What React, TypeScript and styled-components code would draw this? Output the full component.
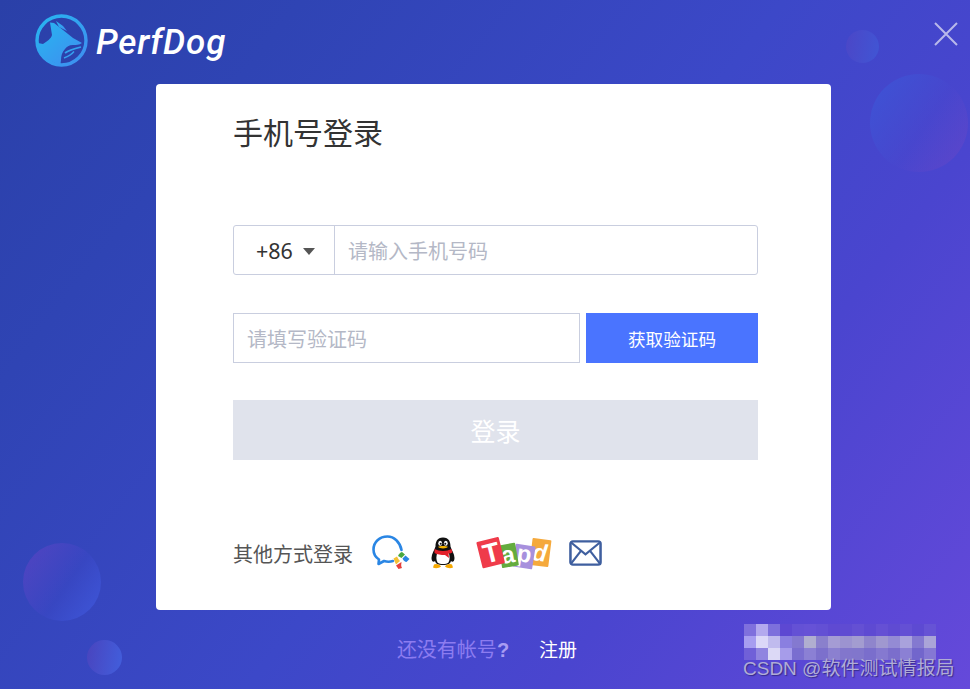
import React from "react";
import styled, { createGlobalStyle } from "styled-components";

const CJK = `"Noto Sans CJK SC", "Liberation Sans", sans-serif`;

const Global = createGlobalStyle`
  html, body { margin: 0; padding: 0; width: 970px; height: 689px; overflow: hidden; }
  * { box-sizing: border-box; }
`;

const Page = styled.div`
  position: relative;
  width: 970px;
  height: 689px;
  overflow: hidden;
  display: flex;
  flex-direction: column;
  align-items: center;
  font-family: ${CJK};
  background: linear-gradient(128deg, #2a40a8 0%, #2f44b4 20%, #3c48c8 52%, #4a45cf 72%, #6549da 100%);
`;

const Header = styled.header`
  position: relative;
  z-index: 1;
  width: 100%;
  height: 84px;
  flex: none;
  display: flex;
  align-items: flex-start;
  justify-content: space-between;
  padding: 14px 11px 0 35px;
`;

const Brand = styled.div`
  display: flex;
  align-items: center;
  gap: 8px;
  height: 53px;
`;

const BrandName = styled.span`
  font-family: Roboto, sans-serif;
  font-style: italic;
  font-weight: 500;
  font-size: 35px;
  letter-spacing: 0.8px;
  line-height: 53px;
  padding-top: 4px;
  color: #fff;
`;

const Close = styled.button`
  width: 26px;
  height: 26px;
  margin-top: 7px;
  padding: 0;
  border: 0;
  background: none;
  display: block;
`;

const Bubble = styled.div<{ $x: number; $y: number; $d: number; $bg: string }>`
  position: absolute;
  left: ${(p) => p.$x}px;
  top: ${(p) => p.$y}px;
  width: ${(p) => p.$d}px;
  height: ${(p) => p.$d}px;
  border-radius: 50%;
  background: ${(p) => p.$bg};
`;

const Card = styled.main`
  position: relative;
  z-index: 1;
  width: 675px;
  height: 526px;
  flex: none;
  margin-left: 17px;
  background: #fff;
  border-radius: 4px;
  padding: 26px 73px 0 77px;
  display: flex;
  flex-direction: column;
`;

const Title = styled.h1`
  margin: 0 0 73px;
  height: 42px;
  font-size: 30px;
  line-height: 42px;
  font-weight: 400;
  color: #333;
`;

const PhoneRow = styled.div`
  display: flex;
  height: 50px;
  margin-bottom: 38px;
  border: 1px solid #c9cedf;
  border-radius: 3px;
`;

const Country = styled.div`
  width: 101px;
  flex: none;
  display: flex;
  align-items: center;
  padding-left: 22px;
  gap: 10px;
  border-right: 1px solid #c9cedf;
  font-family: "Noto Sans", sans-serif;
  font-size: 21.5px;
  color: #333;
`;

const Caret = styled.span`
  width: 0;
  height: 0;
  margin-top: 2px;
  border-left: 6.5px solid transparent;
  border-right: 6.5px solid transparent;
  border-top: 7px solid #555;
`;

const Placeholder = styled.div<{ $pad: number }>`
  flex: 1;
  display: flex;
  align-items: center;
  padding-left: ${(p) => p.$pad}px;
  font-size: 20px;
  color: #b4b8c6;
`;

const CodeRow = styled.div`
  display: flex;
  height: 50px;
  margin-bottom: 37px;
  gap: 6px;
`;

const CodeInput = styled.div`
  flex: 1;
  display: flex;
  border: 1px solid #c9cedf;
`;

const CodeButton = styled.button`
  width: 172px;
  flex: none;
  border: 0;
  padding: 0;
  background: #4a74ff;
  color: #fff;
  font-family: inherit;
  font-size: 17.6px;
`;

const Submit = styled.button`
  height: 60px;
  flex: none;
  border: 0;
  padding: 0;
  background: #e0e3ec;
  color: #fff;
  font-family: inherit;
  font-size: 25px;
`;

const Others = styled.div`
  display: flex;
  align-items: center;
  height: 44px;
  margin-top: 71px;
  font-size: 20px;
  color: #555;
`;

const OthersLabel = styled.span`
  width: 139px;
  flex: none;
`;

const IconSlot = styled.span<{ $w: number; $mr: number }>`
  width: ${(p) => p.$w}px;
  margin-right: ${(p) => p.$mr}px;
  flex: none;
  display: flex;
  svg { display: block; }
`;

const Footer = styled.footer`
  position: relative;
  z-index: 1;
  margin-top: 27px;
  margin-left: 4px;
  display: flex;
  gap: 30px;
  font-size: 19px;
  line-height: 24px;
`;

const Ask = styled.span`
  font-size: 20px;
  color: #8c7cf0;
`;

const AskMark = styled.b`
  font-family: "Liberation Sans", sans-serif;
  color: #a89cf2;
`;

const Register = styled.span`
  color: #fff;
`;

const Mosaic = styled.svg`
  position: absolute;
  left: 744px;
  top: 624px;
  z-index: 2;
`;

const Watermark = styled.div`
  position: absolute;
  left: 743px;
  top: 656px;
  z-index: 3;
  font-family: "Liberation Sans", "Noto Sans CJK SC", sans-serif;
  font-size: 19px;
  line-height: 26px;
  white-space: nowrap;
  color: #b0acd6;
  text-shadow: 1px 1px 1px rgba(30, 25, 90, 0.6);
`;

const mosaic: string[][] = [
  ["#7f70dd", "#b3a9ee", "#7d70dc", "#5d48d2", "#6451d5", "#6652d6", "#6350d4", "#5f4ad2", "#5f4bd2", "#6450d3", "#5e4ad2", "#6550d4", "#5f4bd2", "#6450d4", "#5d4ad2", "#6653d5"],
  ["#a79df0", "#dcd8f8", "#c0bbee", "#8a7fe0", "#8479d0", "#b0aed0", "#8a80cc", "#a59cd4", "#9c93d0", "#a39cd0", "#8f85cc", "#a098d0", "#948bd4", "#a9a2dc", "#8479d0", "#aaa4d8"],
  ["#7060d8", "#9084e0", "#dcd9f6", "#a69cea", "#7a6ed0", "#8b80d4", "#7c70cc", "#8b80d0", "#8276cc", "#8176cc", "#7a6ecc", "#8579d0", "#7b6ecc", "#8b80d4", "#7266cc", "#8578d4"],
];

const LogoMark = () => (
  <svg width="53" height="53" viewBox="0 0 53 53">
    <defs>
      <linearGradient id="lg" x1="0" y1="0" x2="1" y2="1">
        <stop offset="0" stopColor="#27b6f0" />
        <stop offset="1" stopColor="#3f8df0" />
      </linearGradient>
    </defs>
    <circle cx="26.5" cy="26.5" r="24.5" fill="none" stroke="url(#lg)" strokeWidth="3.4" />
    <path
      d="M15 8.5 L19 9 L28 16 L38 24 L47 29 C44 31 41 31 38 31 C34 31 31.5 33 30 35 C27 38 26 42 26 46 L25.5 50 C14 49 4 40 3 29 L8 30 C12 27 16 25 17 21 Z"
      fill="url(#lg)"
    />
    <path d="M21 7 L28 12 L32 17 L24 13 Z" fill="url(#lg)" />
    <path d="M30 39 C34 36 40 34.5 46 33" fill="none" stroke="url(#lg)" strokeWidth="1.8" />
    <path d="M29 44 C33 42.5 37 40 39 37.5" fill="none" stroke="url(#lg)" strokeWidth="1.4" />
  </svg>
);

const CloseIcon = () => (
  <svg width="26" height="26" viewBox="0 0 26 26">
    <path d="M2 2 L24 24 M24 2 L2 24" stroke="#b9b8ea" strokeWidth="2" fill="none" />
  </svg>
);

const WeComIcon = () => (
  <svg width="38" height="36" viewBox="0 0 38 36">
    <path
      d="M29.5 15 C28 7 22 1.5 15.5 1.5 C7.5 1.5 1.5 7 1.5 14.5 C1.5 19 4 22.5 7 24.5 L6.5 29 L12 26 C15 27 18 27 21 26"
      fill="none"
      stroke="#2a86e4"
      strokeWidth="2.6"
      strokeLinecap="round"
      strokeLinejoin="round"
    />
    <path d="M26 21 C27 19 28 17.5 30 17 L33 19.5 L29.5 23 Z" fill="#4aa83f" />
    <path d="M30.5 23.5 L33.5 20.5 L37.5 24 L34.5 27 C33 27 31.5 25.5 30.5 23.5 Z" fill="#2a86e4" />
    <path d="M29.5 27 C29.5 29 28.5 30.5 30 33 L26.5 34 L24 30.5 Z" fill="#e6403a" />
    <path d="M21.5 23.5 L25 21.5 C26 23.5 27 25 28 26 L24 29.5 Z" fill="#f5c033" />
  </svg>
);

const QQIcon = () => (
  <svg width="26" height="32" viewBox="0 0 26 32">
    <path d="M13 0.5 C7 0.5 5.5 5 5.5 9.5 C4.5 13 1.5 17 1.5 21 C1.5 25 4 25.5 5 24 C6 27 8 28 13 28 C18 28 20 27 21 24 C22 25.5 24.5 25 24.5 21 C24.5 17 21.5 13 20.5 9.5 C20.5 5 19 0.5 13 0.5 Z" fill="#111" />
    <path d="M7.5 15 C6 19 6 23 7.5 25.5 C10 27.5 16 27.5 18.5 25.5 C20 23 20 19 18.5 15 Z" fill="#fff" />
    <ellipse cx="10.2" cy="6.3" rx="1.9" ry="2.5" fill="#fff" />
    <ellipse cx="15.8" cy="6.3" rx="1.9" ry="2.5" fill="#fff" />
    <circle cx="10.7" cy="6.8" r="1" fill="#111" />
    <circle cx="15.3" cy="6.8" r="1" fill="#111" />
    <path d="M8 9.8 C10.5 8.8 15.5 8.8 18 9.8 C16.5 12 9.5 12 8 9.8 Z" fill="#f5b400" />
    <path d="M4.5 12 C9 14.5 17 14.5 21.5 12 L22.5 15.5 C20.5 16.5 19.5 16.5 18.5 16.5 L19 21 L15 18 C11 18 7 17.5 4.5 16 Z" fill="#e3212b" />
    <path d="M4 27.5 C6 26 10 27.5 11 29.5 C9 31.5 5 31.5 3 30.5 Z" fill="#f5a800" />
    <path d="M22 27.5 C20 26 16 27.5 15 29.5 C17 31.5 21 31.5 23 30.5 Z" fill="#f5a800" />
  </svg>
);

const TapdIcon = () => (
  <svg width="76" height="36" viewBox="0 0 76 36" fontFamily="'Liberation Sans', sans-serif" fontWeight="700" textAnchor="middle">
    <rect x="55" y="4" width="19" height="27" rx="1" fill="#f5a93c" transform="rotate(7 64 17)" />
    <text x="64" y="26" fontSize="24" fontStyle="italic" fill="#fff" transform="rotate(7 64 17)">d</text>
    <rect x="38" y="10" width="20" height="23" rx="1" fill="#a790dd" transform="rotate(9 48 21)" />
    <text x="48" y="27" fontSize="24" fill="#fff" transform="rotate(9 48 21)">p</text>
    <rect x="24" y="9" width="17" height="23" rx="1" fill="#63ac3e" transform="rotate(-10 32 20)" />
    <text x="32" y="28" fontSize="24" fill="#fff" transform="rotate(-10 32 20)">a</text>
    <rect x="3" y="4" width="23" height="27" rx="1" fill="#ef3b4a" transform="rotate(-14 15 17)" />
    <text x="15" y="27" fontSize="27" fill="#fff" transform="rotate(-14 15 17)">T</text>
  </svg>
);

const MailIcon = () => (
  <svg width="33" height="26" viewBox="0 0 34 28" preserveAspectRatio="none">
    <rect x="1.5" y="1.5" width="31" height="25" rx="2.5" fill="#fff" stroke="#3f5f9f" strokeWidth="2.6" />
    <path d="M2.5 3 L17 15.5 L31.5 3 M2.5 25 L12.5 11.5 M31.5 25 L21.5 11.5" fill="none" stroke="#3f5f9f" strokeWidth="2.2" />
  </svg>
);

export default function App() {
  return (
    <Page>
      <Global />
      <Bubble $x={846} $y={30} $d={33} $bg="linear-gradient(100deg, rgba(84,70,196,.55), rgba(64,88,214,.85))" />
      <Bubble $x={870} $y={74} $d={98} $bg="linear-gradient(125deg, rgba(62,84,214,.8) 10%, rgba(74,72,206,.25) 55%, rgba(100,70,200,.75) 100%)" />
      <Bubble $x={23} $y={543} $d={78} $bg="linear-gradient(125deg, rgba(92,68,196,.7) 5%, rgba(62,72,204,.3) 55%, rgba(64,90,222,.85) 100%)" />
      <Bubble $x={87} $y={640} $d={35} $bg="linear-gradient(100deg, rgba(90,68,190,.5) 5%, rgba(66,96,222,.95) 100%)" />
      <Header>
        <Brand>
          <LogoMark />
          <BrandName>PerfDog</BrandName>
        </Brand>
        <Close aria-label="关闭">
          <CloseIcon />
        </Close>
      </Header>
      <Card>
        <Title>手机号登录</Title>
        <PhoneRow>
          <Country>
            +86
            <Caret />
          </Country>
          <Placeholder $pad={13}>请输入手机号码</Placeholder>
        </PhoneRow>
        <CodeRow>
          <CodeInput>
            <Placeholder $pad={13}>请填写验证码</Placeholder>
          </CodeInput>
          <CodeButton>获取验证码</CodeButton>
        </CodeRow>
        <Submit>登录</Submit>
        <Others>
          <OthersLabel>其他方式登录</OthersLabel>
          <IconSlot $w={38} $mr={20}><WeComIcon /></IconSlot>
          <IconSlot $w={26} $mr={20}><QQIcon /></IconSlot>
          <IconSlot $w={76} $mr={17}><TapdIcon /></IconSlot>
          <IconSlot $w={33} $mr={0}><MailIcon /></IconSlot>
        </Others>
      </Card>
      <Footer>
        <Ask>还没有帐号<AskMark>?</AskMark></Ask>
        <Register>注册</Register>
      </Footer>
      <Mosaic width="192" height="36" viewBox="0 0 192 36">
        {mosaic.map((row, r) =>
          row.map((fill, c) => <rect key={`${r}-${c}`} x={c * 12} y={r * 12} width="12" height="12" fill={fill} />)
        )}
      </Mosaic>
      <Watermark>CSDN @软件测试情报局</Watermark>
    </Page>
  );
}
